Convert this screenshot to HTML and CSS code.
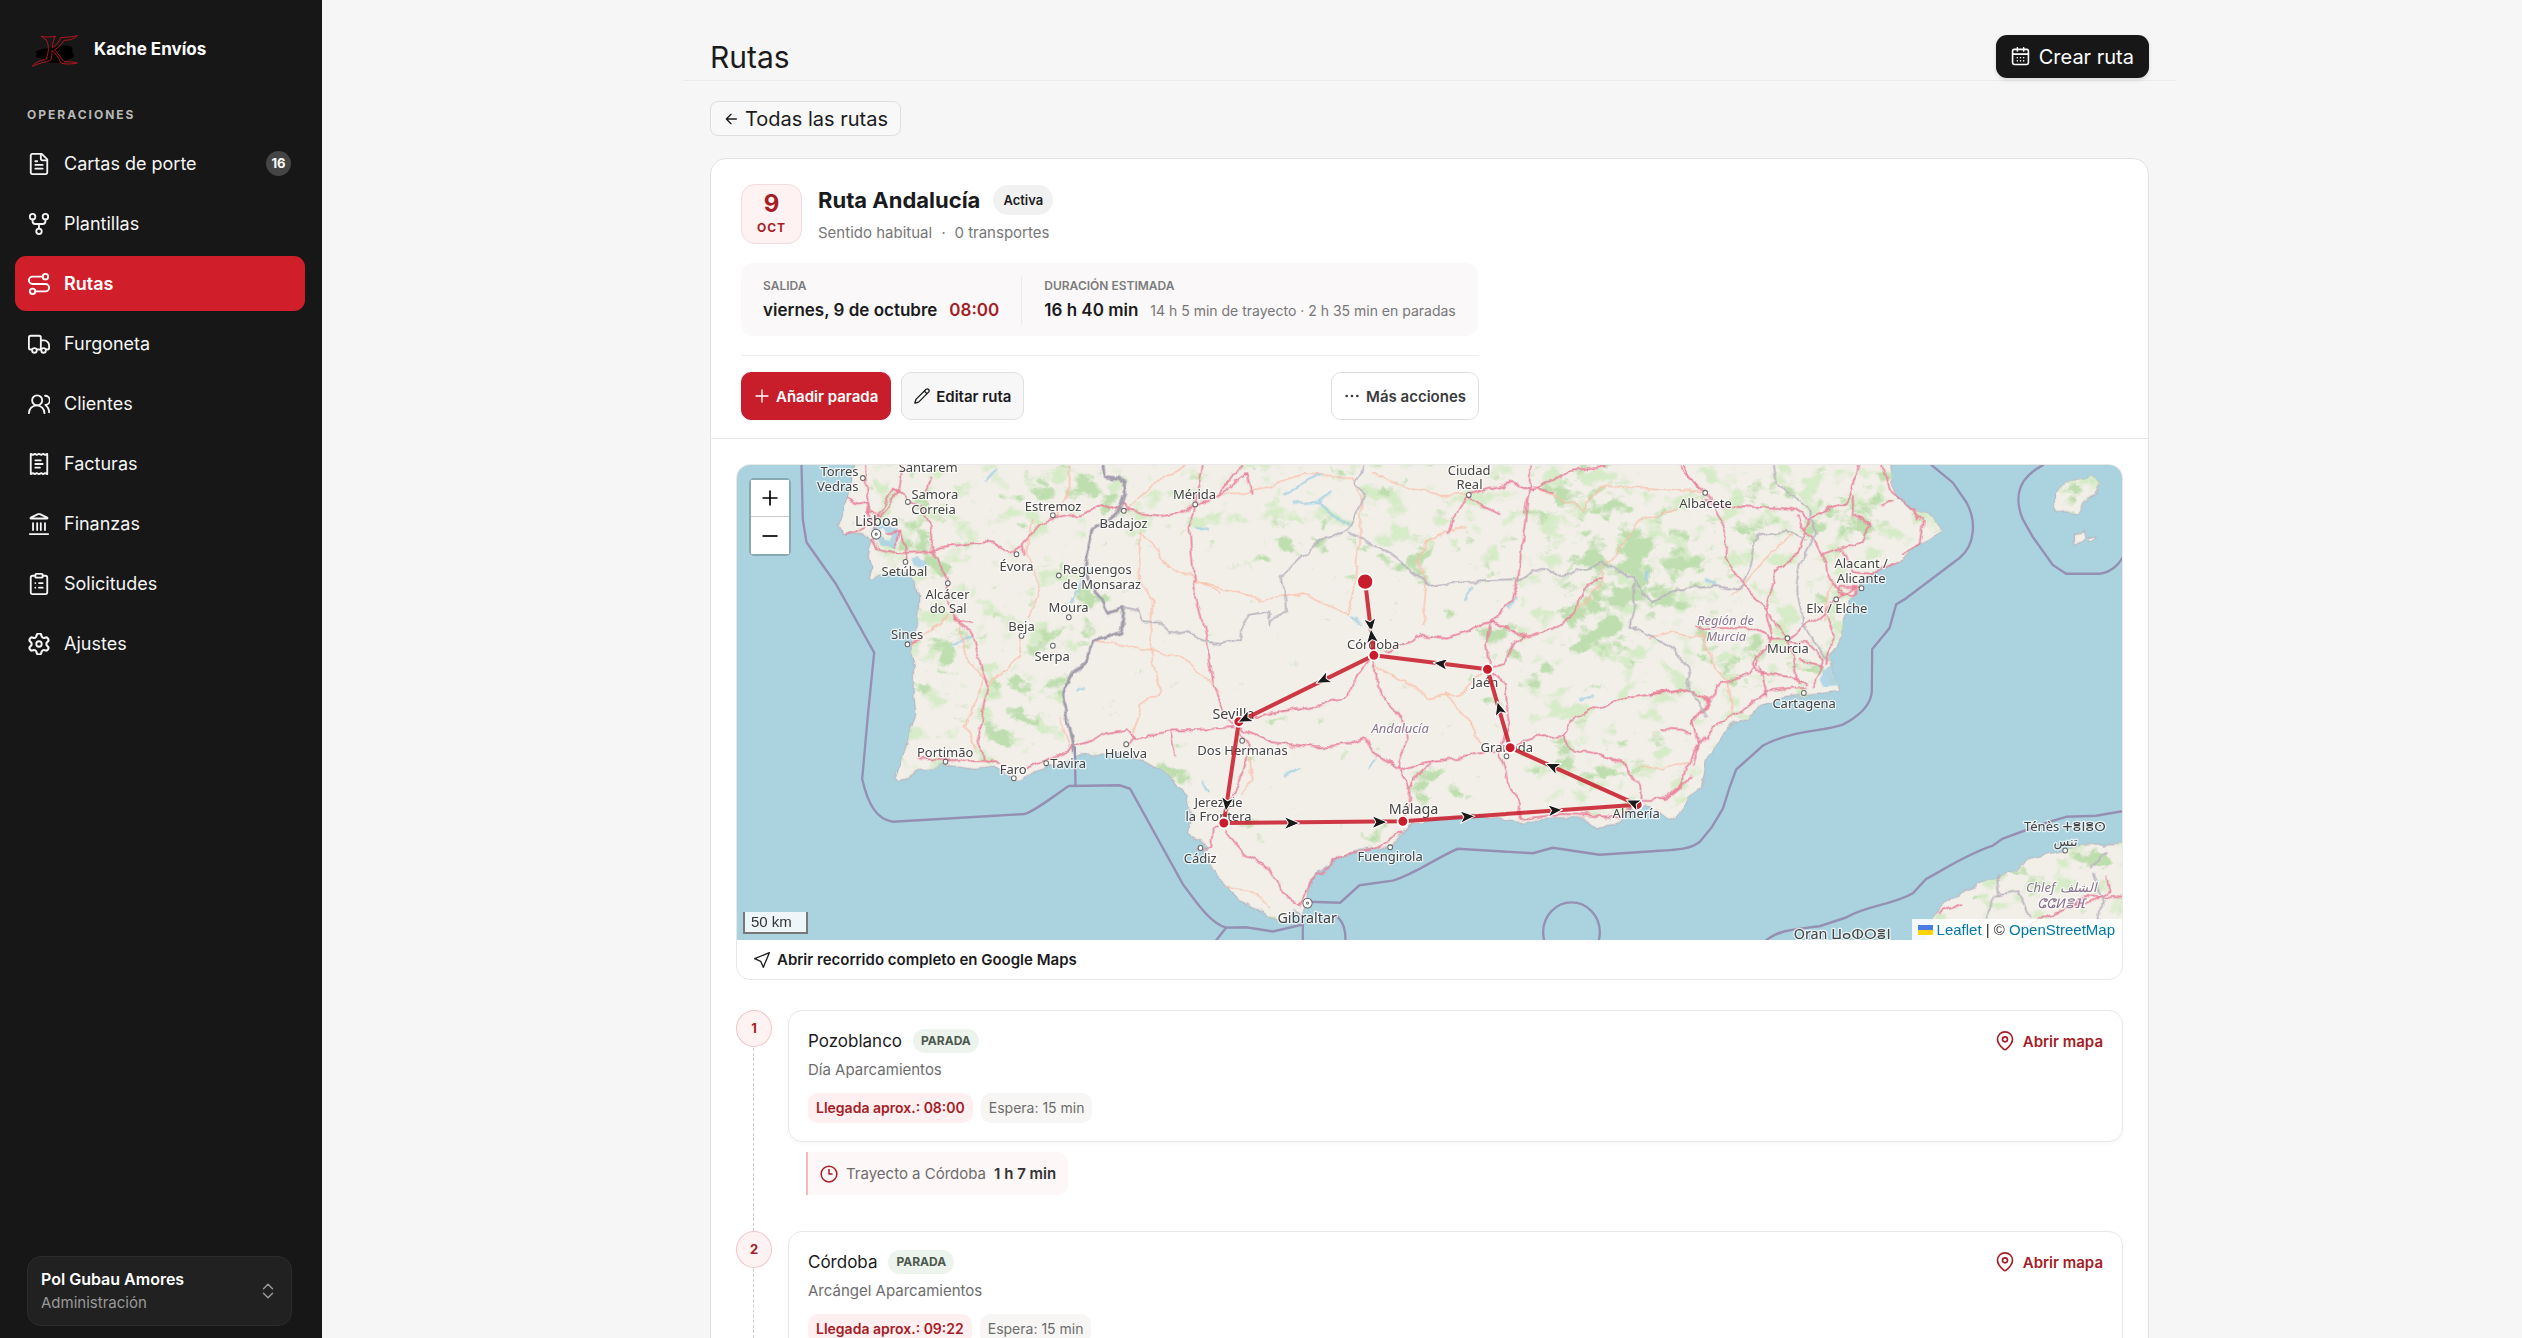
FILE: index.html
```html
<!DOCTYPE html>
<html lang="es">
<head>
<meta charset="utf-8">
<title>Rutas · Kache Envíos</title>
<link rel="stylesheet" href="styles.css">
</head>
<body>
<svg class="sprite" aria-hidden="true">
  <symbol id="i-file" viewBox="0 0 24 24"><path d="M15 1H5a2 2 0 0 0-2 2v18a2 2 0 0 0 2 2h14a2 2 0 0 0 2-2V7Z"/><path d="M14 1v5a2 2 0 0 0 2 2h5M10 9H8M16 13H8M16 17H8"/></symbol>
  <symbol id="i-fork" viewBox="0 0 24 24"><circle cx="12" cy="20" r="3"/><circle cx="5" cy="4" r="3"/><circle cx="19" cy="4" r="3"/><path d="M5 7v2a3 3 0 0 0 3 3h8a3 3 0 0 0 3-3V7M12 12v5"/></symbol>
  <symbol id="i-route" viewBox="0 0 24 24"><circle cx="5" cy="20" r="3"/><circle cx="19" cy="4" r="3"/><path d="M8 20h11a4 4 0 0 0 0-8H5a4 4 0 0 1 0-8h11"/></symbol>
  <symbol id="i-truck" viewBox="0 0 24 24"><path d="M14 18V5a2 2 0 0 0-2-2H3a2 2 0 0 0-2 2v12a1 1 0 0 0 1 1h2M10 18h4M20 18h2a1 1 0 0 0 1-1v-4c0-2-3-5-5-5h-4"/><circle cx="7" cy="19" r="2.500"/><circle cx="17" cy="19" r="2.500"/></symbol>
  <symbol id="i-users" viewBox="0 0 24 24"><path d="M18 22a8 8 0 0 0-17 0"/><circle cx="10" cy="8" r="5.500"/><path d="M23 21c0-3.370-2-6.500-4-8a5 5 0 0 0-.45-10"/></symbol>
  <symbol id="i-receipt" viewBox="0 0 24 24"><path d="M3 1v22l2.500-1 2 1 2-1 2.500 1 2.500-1 2 1 2-1 2.500 1V1l-2.500 1-2-1-2 1L12 1 9.500 2l-2-1-2 1ZM14 8H8M16 12H8M13 16H8"/></symbol>
  <symbol id="i-bank" viewBox="0 0 24 24"><path d="M2 23h20M5.500 18.500V11M10 18.500V11M14 18.500V11M18.500 18.500V11"/><path d="M11 1.300a2 2 0 0 1 2 0l8 3.800c.5.300.3.900-.2.900H3.200c-.5 0-.7-.6-.2-.9z"/></symbol>
  <symbol id="i-clip" viewBox="0 0 24 24"><rect x="8" y="1" width="8" height="4" rx="1"/><path d="M16 3h3a2 2 0 0 1 2 2v16a2 2 0 0 1-2 2H5a2 2 0 0 1-2-2V5a2 2 0 0 1 2-2h3M12 11h4M12 16h4M8 11h.01M8 16h.01"/></symbol>
  <symbol id="i-gear" viewBox="0 0 24 24"><path d="M9.671 4.136a2.340 2.340 0 0 1 4.659 0 2.340 2.340 0 0 0 3.319 1.915 2.340 2.340 0 0 1 2.330 4.033 2.340 2.340 0 0 0 0 3.831 2.340 2.340 0 0 1-2.330 4.033 2.340 2.340 0 0 0-3.319 1.915 2.340 2.340 0 0 1-4.659 0 2.340 2.340 0 0 0-3.320-1.915 2.340 2.340 0 0 1-2.330-4.033 2.340 2.340 0 0 0 0-3.831A2.340 2.340 0 0 1 6.350 6.051a2.340 2.340 0 0 0 3.319-1.915" transform="matrix(1.150 0 0 1.150 -1.800 -1.800)"/><circle cx="12" cy="12" r="3"/></symbol>
  <symbol id="i-updown" viewBox="0 0 24 24"><path d="m6 15 6 6 6-6M6 9l6-6 6 6"/></symbol>
  <symbol id="i-cal" viewBox="0 0 24 24"><rect x="2" y="3" width="20" height="19" rx="2"/><path d="M8 1v4M16 1v4M2 9h20M8 13.500h.01M12 13.500h.01M16 13.500h.01M8 17.500h.01M12 17.500h.01M16 17.500h.01"/></symbol>
  <symbol id="i-back" viewBox="0 0 24 24"><path d="m12 19-7-7 7-7M20 12H5"/></symbol>
  <symbol id="i-plus" viewBox="0 0 24 24"><path d="M3 12h18M12 3v18"/></symbol>
  <symbol id="i-minus" viewBox="0 0 24 24"><path d="M3 12h18"/></symbol>
  <symbol id="i-pencil" viewBox="0 0 24 24"><path d="M22.200 5.800a2.900 2.900 0 0 0-4-4L3.300 16.700a2 2 0 0 0-.5.800L1.300 22.200a.5.500 0 0 0 .6.600l4.600-1.500a2 2 0 0 0 .8-.5zM15.500 4.500l4 4"/></symbol>
  <symbol id="i-dots" viewBox="0 0 24 24"><circle cx="4" cy="12" r="1"/><circle cx="12" cy="12" r="1"/><circle cx="20" cy="12" r="1"/></symbol>
  <symbol id="i-nav" viewBox="0 0 24 24"><path d="M23 1 1 10l9 4 4 9Z"/></symbol>
  <symbol id="i-pin" viewBox="0 0 24 24"><path d="M21 10c0 5-5.500 10.200-7.400 11.800a2.500 2.500 0 0 1-3.200 0C8.500 20.200 3 15 3 10a9 9 0 0 1 18 0"/><circle cx="12" cy="10" r="3"/></symbol>
  <symbol id="i-clock" viewBox="0 0 24 24"><circle cx="12" cy="12" r="10.500"/><path d="M12 6v6h4"/></symbol>
</svg>

<div class="app">
  <aside class="sidebar">
    <div class="brand">
      <svg class="brand-logo" viewBox="0 0 138 96" role="img" aria-label="Kache Envíos">
        <path class="logo-shade" d="M10 50c18-8 30-10 46-12s44-12 62-2c8 6 0 14 6 20s0 14-12 16-16 12-36 12-26 0-36-8-18-6-26-8 6-10-4-18z"/>
        <path class="logo-line" d="M28 4c14 3 26 3 42 0-6 10-8 20-9 34C74 30 80 22 86 8c16-2 34-1 50-6-12 12-30 14-40 14-8 12-14 20-28 28 8 10 16 20 28 36 12 0 26 0 40 4-16 4-38 4-50 0-6-16-14-28-26-38 0 12 0 20-4 30C40 82 20 84 1 94c10-14 26-18 42-22 8-22 8-40 0-58-6-2-10-4-15-10z"/>
      </svg>
      <strong>Kache Envíos</strong>
    </div>
    <h2 class="section">Operaciones</h2>
    <nav class="nav">
      <a href="#"><svg><use href="#i-file"/></svg><span>Cartas de porte</span><b class="count">16</b></a>
      <a href="#"><svg><use href="#i-fork"/></svg><span>Plantillas</span></a>
      <a href="#" class="current" aria-current="page"><svg><use href="#i-route"/></svg><span>Rutas</span></a>
      <a href="#"><svg><use href="#i-truck"/></svg><span>Furgoneta</span></a>
      <a href="#"><svg><use href="#i-users"/></svg><span>Clientes</span></a>
      <a href="#"><svg><use href="#i-receipt"/></svg><span>Facturas</span></a>
      <a href="#"><svg><use href="#i-bank"/></svg><span>Finanzas</span></a>
      <a href="#"><svg><use href="#i-clip"/></svg><span>Solicitudes</span></a>
      <a href="#"><svg><use href="#i-gear"/></svg><span>Ajustes</span></a>
    </nav>
    <button type="button" class="user">
      <span class="user-text"><strong>Pol Gubau Amores</strong><span>Administración</span></span>
      <svg><use href="#i-updown"/></svg>
    </button>
  </aside>

  <main class="main">
    <div class="page">
      <header class="page-head">
        <h1>Rutas</h1>
        <button type="button" class="btn-dark"><svg><use href="#i-cal"/></svg>Crear ruta</button>
      </header>
      <div class="page-body">
        <a href="#" class="back"><svg><use href="#i-back"/></svg>Todas las rutas</a>

        <article class="card">
          <header class="card-head">
            <div class="route-head">
              <div class="date"><b>9</b><span>OCT</span></div>
              <div class="route-text">
                <div class="route-title"><h2>Ruta Andalucía</h2><span class="status">Activa</span></div>
                <p><span>Sentido habitual</span><i>·</i><span>0 transportes</span></p>
              </div>
            </div>
            <dl class="summary">
              <div><dt>SALIDA</dt><dd><b>viernes, 9 de octubre</b><b class="red">08:00</b></dd></div>
              <div><dt>DURACIÓN ESTIMADA</dt><dd><b>16 h 40 min</b><span>14 h 5 min de trayecto · 2 h 35 min en paradas</span></dd></div>
            </dl>
            <div class="actions">
              <button type="button" class="btn primary"><svg><use href="#i-plus"/></svg>Añadir parada</button>
              <button type="button" class="btn soft"><svg><use href="#i-pencil"/></svg>Editar ruta</button>
              <button type="button" class="btn more"><svg><use href="#i-dots"/></svg>Más acciones</button>
            </div>
          </header>

          <div class="card-body">
            <section class="map-card">
              <div class="map">
                <svg class="map-canvas" viewBox="51 47 4158 1425" preserveAspectRatio="xMidYMid slice">
                  <defs>
                    <filter id="rough" x="0" y="0" width="4300" height="1500" filterUnits="userSpaceOnUse"><feTurbulence type="fractalNoise" baseFrequency=".02" numOctaves="3" seed="4"/><feDisplacementMap in="SourceGraphic" scale="26" xChannelSelector="R" yChannelSelector="G"/></filter>
                    <filter id="woods" x="0" y="0" width="4300" height="1500" filterUnits="userSpaceOnUse" color-interpolation-filters="sRGB">
                      <feGaussianBlur in="SourceGraphic" stdDeviation="30" result="zone"/>
                      <feTurbulence type="fractalNoise" baseFrequency=".014 .02" numOctaves="5" seed="11" result="noise"/>
                      <feComposite in="zone" in2="noise" operator="arithmetic" k2=".36" k3="1" result="sum"/>
                      <feColorMatrix in="sum" values="0 0 0 0 .75  0 0 0 0 .87  0 0 0 0 .69  0 0 0 7 -5.200"/>
                    </filter>
                    <filter id="fields" x="0" y="0" width="4300" height="1500" filterUnits="userSpaceOnUse" color-interpolation-filters="sRGB">
                      <feTurbulence type="fractalNoise" baseFrequency=".013 .018" numOctaves="5" seed="29"/>
                      <feColorMatrix values="0 0 0 0 .84  0 0 0 0 .92  0 0 0 0 .78  0 0 0 7 -4"/>
                      <feComposite in2="SourceGraphic" operator="in"/>
                    </filter>
                    <path id="iberia" d="M410 0 395 90 380 140 376 180 352 215 365 240 430 236 456 262 445 290 458 330 445 365 500 355 560 350 590 372 598 430 594 500 572 560 585 620 584 710 590 760 570 820 545 890 527 935 540 945 600 912 680 900 760 912 820 908 895 945 960 917 1010 895 1100 872 1200 865 1290 898 1350 935 1400 985 1416 1050 1405 1090 1440 1108 1470 1135 1450 1150 1465 1180 1500 1225 1550 1280 1620 1320 1690 1348 1725 1312 1748 1322 1764 1300 1772 1260 1800 1200 1860 1162 1920 1142 2010 1135 2050 1095 2080 1066 2180 1052 2300 1048 2410 1065 2500 1050 2590 1050 2640 1075 2700 1060 2730 1020 2770 1010 2810 1030 2850 1055 2890 1030 2910 990 2945 968 2960 890 2980 850 3030 790 3090 765 3120 730 3170 712 3240 700 3355 690 3335 620 3330 590 3370 540 3375 480 3390 430 3420 400 3430 370 3470 345 3550 320 3580 280 3640 250 3670 228 3640 195 3580 175 3540 140 3515 90 3508 0Z"/>
                    <path id="africa" d="M3600 1430 3640 1330 3700 1275 3800 1230 3890 1205 3920 1170 4000 1150 4040 1140 4110 1130 4250 1125V1430Z"/>
                    <path id="ibiza" d="M4005 130 4035 95 4110 75 4145 95 4130 130 4085 155 4070 180 4040 175 4005 178ZM4065 240 4095 235 4100 255 4065 272ZM4108 255 4130 256 4125 266 4110 264Z"/>
                    <clipPath id="land"><use href="#iberia"/><use href="#africa"/><use href="#ibiza"/></clipPath>
                    <path id="arrow" d="M24 0-20-19-9 0-20 19Z"/>
                  </defs>

                  <g transform="scale(1 1.052)">
                    <g filter="url(#rough)">
                      <g class="land"><use href="#iberia"/><use href="#africa"/><use href="#ibiza"/></g>
                      <g class="cover" clip-path="url(#land)">
                        <g filter="url(#fields)"><path d="M380 0H1100V500L1020 720 1040 900 500 960ZM1100 0H3700V300L3300 800 2700 1100H2400V380L1700 200 1200 250ZM3600 1100H4250V1430H3600ZM3990 60H4160V280H3990Z"/></g>
                        <g filter="url(#woods)">
                          <ellipse cx="600" cy="220" rx="50" ry="80"/><ellipse cx="650" cy="330" rx="50" ry="60"/><ellipse cx="670" cy="550" rx="70" ry="50"/>
                          <ellipse cx="840" cy="835" rx="70" ry="35"/><ellipse cx="680" cy="700" rx="80" ry="70" opacity=".6"/><ellipse cx="920" cy="700" rx="120" ry="120" opacity=".5"/>
                          <ellipse cx="1000" cy="480" rx="150" ry="90" opacity=".55"/><ellipse cx="1050" cy="120" rx="180" ry="80" opacity=".6"/><ellipse cx="1180" cy="390" rx="70" ry="70" opacity=".6"/>
                          <ellipse cx="1380" cy="930" rx="60" ry="80" opacity=".8"/><ellipse cx="1700" cy="270" rx="160" ry="60" opacity=".6"/><ellipse cx="2000" cy="70" rx="180" ry="60" opacity=".6"/>
                          <ellipse cx="2100" cy="320" rx="200" ry="70" opacity=".6"/><ellipse cx="2600" cy="170" rx="170" ry="160" opacity=".6"/><ellipse cx="2640" cy="480" rx="110" ry="140"/>
                          <ellipse cx="2750" cy="330" rx="130" ry="110"/><ellipse cx="2880" cy="300" rx="120" ry="90" opacity=".8"/><ellipse cx="2900" cy="450" rx="110" ry="50" opacity=".8"/>
                          <ellipse cx="3080" cy="200" rx="90" ry="80" opacity=".6"/><ellipse cx="3180" cy="90" rx="60" ry="60" opacity=".8"/><ellipse cx="3350" cy="200" rx="130" ry="80" opacity=".8"/>
                          <ellipse cx="3500" cy="150" rx="80" ry="80" opacity=".6"/><ellipse cx="3060" cy="590" rx="130" ry="60" opacity=".8"/><ellipse cx="3280" cy="560" rx="60" ry="80" opacity=".6"/>
                          <ellipse cx="2330" cy="540" rx="70" ry="90" opacity=".6"/><ellipse cx="2180" cy="960" rx="140" ry="70" opacity=".6"/><ellipse cx="1940" cy="1105" rx="70" ry="35"/>
                          <ellipse cx="2580" cy="900" rx="130" ry="80" opacity=".6"/><ellipse cx="2720" cy="850" rx="60" ry="50" opacity=".8"/><ellipse cx="2430" cy="640" rx="80" ry="40" opacity=".7"/>
                          <ellipse cx="3900" cy="1200" rx="90" ry="60" opacity=".8"/><ellipse cx="4120" cy="1160" rx="100" ry="40"/><ellipse cx="4070" cy="120" rx="60" ry="40"/>
                        </g>
                      </g>
                      <g class="water">
                        <path class="wide" d="M462 225 490 215 530 240 515 270 480 262M590 318 610 330"/>
                        <path d="M1700 125 1760 90 1800 75M1720 155 1800 150 1840 190 1890 215M1800 150 1830 120M1430 225 1460 230M1060 440 1080 400 1110 340M800 90 830 60M700 560 760 530M1070 690 1090 680M1450 950 1465 975M2370 450 2385 430M2240 430 2255 390M1890 480 1920 495M2580 715 2620 705M1950 910 1970 890M1740 910 1700 930M2960 370 2990 385M2780 370 2790 350"/>
                        <path class="lagoon" d="M3312 630 3330 620 3345 670 3310 672Z"/>
                      </g>
                      <g class="minor">
                        <path d="M1050 45V110L1010 195M1440 20 1320 85 1220 170M1265 240 1255 350 1300 430 1290 565 1320 690 1270 730 1240 810M1265 240 1350 330 1500 410M1120 545 1290 570 1400 600 1500 690M940 200 920 300 965 390 930 480M905 530 900 590 810 670M720 490 745 610 790 650 740 790 770 850M690 470 640 510 575 555M1020 760 1050 850"/>
                        <path d="M1500 130 1640 110 1750 70 1900 80 1930 160 1920 250 1910 370 1885 470 1750 410 1640 430 1440 380M1960 70 2060 110 2170 130 2240 125M2240 220 2110 265 2100 320 2120 380 2110 500M2440 110 2590 170 2640 105 2780 110 2950 120M2870 165 2750 210 2700 290 2650 340 2640 390 2560 480M1970 620 2060 665 2130 710 2220 700 2290 640M2180 700 2260 790 2290 840M1590 880 1600 940 1570 980M1520 1250 1600 1260 1650 1310M2970 540 2850 520 2790 540M3040 420 3150 300 3220 240M2940 520 2990 620 3030 680 3040 770M2760 910 2890 900 2920 880M3330 380 3310 480"/>
                      </g>
                      <g class="road">
                        <path d="M437 45 440 110 450 180 480 190M550 45 540 110 500 170 480 190M635 80 620 130M550 130 520 115 480 180 420 230 375 240M530 115 600 160 630 210 640 290 680 360 690 440 700 480 760 520 790 640 808 675 775 800 790 885M380 140 410 155 440 150 460 230M455 260 470 285 520 297 610 293 700 275 800 262 870 290 910 270 960 215 1000 198 1080 185 1150 162 1190 175 1330 190 1380 180 1420 160M500 240 540 235 520 280M565 320 560 270 540 240M910 270 915 310M1430 160 1410 230 1425 390 1460 530 1480 660 1510 740 1540 790M1425 160 1450 45M1430 160 1510 125 1580 70 1600 125M1500 125 1570 45M600 885 690 890 790 885 840 895M920 910 970 885 1060 850 1120 830 1160 810 1220 800 1240 820 1350 802 1440 800 1560 790M1185 175 1210 155 1220 175M700 485 760 492M575 550 610 540M1240 815 1215 850M1355 805 1370 870"/>
                        <path d="M1560 775 1640 755 1800 730 1880 710 1920 640 1960 590M1965 590 1970 680 2050 770 2060 830 2035 910M1560 790 1650 835 1800 850 1880 840 1940 820 1960 870 2040 915 2075 960 2070 1010 2050 1060M2040 915 2120 895 2280 870 2370 850M2070 960 2110 920 2140 890M1560 800 1590 850 1570 930 1530 1000 1515 1060 1480 1080 1475 1130 1440 1140M1515 1090 1580 1160 1650 1200 1690 1270 1740 1300 1800 1210 1860 1160 1960 1140 2050 1090M2000 575 2060 558 2110 530 2180 540 2250 520 2310 490 2380 430 2395 380 2410 250 2430 110 2432 45M2240 130 2200 200 2190 245M2240 130 2380 95 2440 120 2540 65 2660 45M2240 130 2280 160 2340 185M2310 490 2410 530 2510 510 2570 470 2590 400 2640 370M2310 490 2300 560 2310 625M2310 625 2360 670 2370 780 2340 860 2370 960 2405 1010 2400 1055 2530 1040 2700 1050 2760 1000 2840 1000 2920 930M2310 620 2360 610 2380 560 2420 530M2390 840 2450 820 2530 815 2560 770 2620 740 2720 710 2880 685 2970 710 2925 780 2940 840 2920 900M2530 815 2550 855 2640 870 2720 900 2760 960 2760 1000M2820 795 2890 800 2920 815M2440 110 2500 130M2870 20 2940 110"/>
                        <path d="M2870 45 2960 120 3020 230 3015 310 3080 400 3140 460 3200 540 3220 590 3240 670M2960 150 3060 165 3220 172 3270 195 3380 150 3420 45M3230 190 3290 270 3320 330 3325 370 3370 410M3270 200 3240 290 3170 350 3140 460M3400 130 3400 190 3450 210 3430 265 3310 300M3370 290 3400 350 3460 355 3540 320M3490 45 3510 110 3580 170 3610 210 3600 270 3550 300M3480 160 3520 150M3140 470 3160 540 3100 610 3120 640 3220 650 3260 670M2930 510 3080 510 3150 540 3200 540 3290 480 3350 430 3400 400 3420 395M3360 395H3410V415H3360ZM3200 545 3260 550 3310 600 3280 680M3240 600 3310 615M3320 470 3340 540 3320 610M3260 680 3140 690 3060 750 2980 790 2940 840 2900 910 2880 960 2830 1000M2790 703 2890 685 2970 715M3010 665 3090 640 3120 600M3010 665 2970 720 2920 790M3120 620 3140 700"/>
                        <path d="M4160 1220 4170 1260 4120 1290 4060 1300 4110 1275 4209 1282M4060 1300 3960 1340 3900 1370M3660 1320 3720 1300"/>
                      </g>
                      <g class="border">
                        <path class="thick" d="M1150 45 1155 75 1200 80 1218 110 1190 190 1120 230 1095 340 1130 400 1165 465 1215 450 1205 520 1120 545 1105 600 1050 650 1025 715 1050 790 1065 860"/>
                        <path d="M1215 450 1260 460 1270 490 1330 495 1350 525 1400 515 1450 545 1500 555 1570 540 1580 470 1650 460 1650 500 1700 460 1690 360 1800 260 1890 230 1940 130 1905 100 1930 45M1890 240 2000 290 2080 350 2130 390 2240 375 2400 370 2440 345 2560 355 2650 320 2740 370 2750 440 2730 500 2850 560 2905 620 2910 690 2960 760M2740 370 2800 440 2870 400 2990 390 3060 400 3090 330 3110 250 3200 230 3260 260M3160 45 3170 100 3270 170 3290 240 3240 330 3230 400 3250 500 3320 600M3800 1340 3830 1270 3900 1260 3930 1330M4120 1210 4150 1290 4140 1340M3830 1210 3840 1270M4110 1190 4160 1150"/>
                      </g>
                    </g>

                    <g class="maritime">
                      <path d="M246 45 250 200 261 265 350 385 464 580 445 760 428 940C445 1010 470 1055 520 1062L915 1040C950 1030 1000 990 1048 960L1200 958 1232 968 1390 1240C1430 1290 1470 1350 1520 1364L1580 1363 1660 1375 1750 1355M1066 850 1068 958M1520 1364 1490 1400M1750 1345V1400M1765 1290 1862 1293 1920 1243 2020 1230C2090 1210 2140 1170 2215 1139L2440 1152 2500 1136 2640 1156 2800 1146C2870 1142 2910 1142 2940 1120L2975 1080 3010 1025 3030 965 3050 913 3130 845C3220 800 3310 805 3370 785 3420 760 3455 730 3457 690L3458 570 3510 510 3530 442 3560 425 3720 310C3770 270 3770 200 3740 150L3700 95 3636 45M3970 45C3900 80 3880 130 3910 200L3940 250 4000 330 4040 355H4140C4180 350 4200 325 4215 300M4209 1032 4130 1045 4040 1048 3980 1065 3850 1110 3820 1130C3740 1155 3670 1200 3620 1225L3580 1266C3520 1300 3440 1300 3380 1335L3300 1360C3220 1370 3180 1370 3140 1400"/>
                      <circle cx="2556" cy="1377" r="85"/><path d="M1850 1330C1875 1350 1878 1375 1878 1400"/>
                    </g>

                    <g class="dots">
                      <circle cx="430" cy="82" r="7"/><circle cx="565" cy="150" r="7"/><circle cx="558" cy="321" r="7"/><circle cx="1000" cy="188" r="7"/><circle cx="1213" cy="175" r="7"/><circle cx="1427" cy="157" r="7"/><circle cx="891" cy="299" r="7"/><circle cx="1018" cy="360" r="7"/><circle cx="685" cy="382" r="7"/><circle cx="1048" cy="479" r="7"/><circle cx="906" cy="532" r="7"/><circle cx="1000" cy="560" r="7"/><circle cx="564" cy="556" r="7"/><circle cx="678" cy="891" r="7"/><circle cx="883" cy="938" r="7"/><circle cx="980" cy="895" r="7"/><circle cx="1220" cy="841" r="7"/><circle cx="1443" cy="1137" r="7"/><circle cx="1568" cy="831" r="7"/><circle cx="2248" cy="130" r="7"/><circle cx="2012" cy="1135" r="7"/><circle cx="2361" cy="875" r="7"/><circle cx="2957" cy="124" r="7"/><circle cx="3426" cy="396" r="7"/><circle cx="3350" cy="428" r="7"/><circle cx="3204" cy="539" r="7"/><circle cx="3253" cy="695" r="7"/><circle cx="4037" cy="1144" r="7"/>
                      <circle cx="470" cy="242" r="14"/><circle cx="470" cy="242" r="3"/><circle cx="1764" cy="1294" r="14"/><circle cx="1764" cy="1294" r="3"/>
                    </g>
                  </g>

                  <g class="labels">
                    <text x="360" y="79">Torres</text><text x="355" y="124">Vedras</text><text x="626" y="69">Santarém</text><text x="646" y="150">Samora</text><text x="642" y="195">Correia</text>
                    <text x="1001" y="184">Estremoz</text><text x="1212" y="235">Badajoz</text><text x="1425" y="150">Mérida</text><text x="555" y="381">Setúbal</text><text x="891" y="365">Évora</text>
                    <text x="1133" y="374">Reguengos</text><text x="1147" y="418">de Monsaraz</text><text x="684" y="448">Alcácer</text><text x="686" y="492">do Sal</text><text x="1047" y="489">Moura</text><text x="906" y="544">Beja</text><text x="563" y="569">Sines</text><text x="998" y="635">Serpa</text>
                    <text x="677" y="922">Portimão</text><text x="881" y="973">Faro</text><text x="1046" y="955">Tavira</text><text x="1219" y="927">Huelva</text><text x="1442" y="1240">Cádiz</text><text x="1569" y="916">Dos Hermanas</text><text x="1497" y="1072">Jerez de</text><text x="1497" y="1116">la Frontera</text>
                    <text x="2249" y="76">Ciudad</text><text x="2250" y="120">Real</text><text x="2297" y="712">Jaén</text><text x="2362" y="907">Granada</text><text x="2750" y="1105">Almería</text><text x="2012" y="1236">Fuengirola</text><text x="1961" y="600">Córdoba</text>
                    <text x="2958" y="176">Albacete</text><text x="3425" y="357">Alacant /</text><text x="3425" y="401">Alicante</text><text x="3352" y="492">Elx / Elche</text><text x="3205" y="610">Murcia</text><text x="3254" y="776">Cartagena</text>
                    <text x="4036" y="1145">Ténès ⵜⴻⵏⴻⵙ</text><text x="4038" y="1191">تنس</text>
                    <g class="big"><text x="472" y="230">Lisboa</text><text x="1763" y="1421">Gibraltar</text><text x="1542" y="808">Sevilla</text><text x="2082" y="1095">Málaga</text><text x="3368" y="1468">Oran ⵡⴰⵀⵔⴻⵏ</text></g>
                    <g class="region"><text x="2042" y="850">Andalucía</text><text x="3018" y="527">Región de</text><text x="3020" y="576">Murcia</text><text x="3963" y="1328">Chlef</text><text x="4078" y="1328">الشلف</text><text x="4025" y="1377">ⵛⵛⵍⴻⴼ</text></g>
                  </g>

                  <g transform="translate(1440 0)">
                    <path class="track" d="M497 397 523 618 118 817 73 1121 610 1116 1313 1066 932 895 864 660 523 618 497 397"/>
                    <g class="stops"><circle cx="497" cy="397" r="24"/><circle cx="523" cy="618" r="16"/><circle cx="118" cy="817" r="16"/><circle cx="73" cy="1121" r="16"/><circle cx="610" cy="1116" r="16"/><circle cx="1313" cy="1066" r="16"/><circle cx="932" cy="895" r="16"/><circle cx="864" cy="660" r="16"/></g>
                    <g class="arrows">
                      <use href="#arrow" transform="translate(513 526) rotate(83)"/><use href="#arrow" transform="translate(517 562) rotate(263)"/><use href="#arrow" transform="translate(372 691) rotate(154)"/><use href="#arrow" transform="translate(137 808) rotate(154)"/><use href="#arrow" transform="translate(82 1063) rotate(98)"/><use href="#arrow" transform="translate(275 1121)"/><use href="#arrow" transform="translate(538 1118)"/><use href="#arrow" transform="translate(802 1102) rotate(-4)"/><use href="#arrow" transform="translate(1065 1083) rotate(-4)"/><use href="#arrow" transform="translate(1302 1061) rotate(204)"/><use href="#arrow" transform="translate(1060 952) rotate(204)"/><use href="#arrow" transform="translate(900 779) rotate(254)"/><use href="#arrow" transform="translate(725 643) rotate(187)"/>
                    </g>
                  </g>
                </svg>
                <div class="zoom"><button type="button" aria-label="Acercar"><svg><use href="#i-plus"/></svg></button><button type="button" aria-label="Alejar"><svg><use href="#i-minus"/></svg></button></div>
                <div class="scale">50 km</div>
                <div class="credit"><svg viewBox="0 0 15 10"><path fill="#4c7be1" d="M0 0h15v5H0z"/><path fill="#ffd500" d="M0 5h15v5H0z"/></svg><a href="#">Leaflet</a> | © <a href="#">OpenStreetMap</a></div>
              </div>
              <a href="#" class="map-link"><svg><use href="#i-nav"/></svg>Abrir recorrido completo en Google Maps</a>
            </section>

            <ol class="stops-list">
              <li>
                <span class="num">1</span>
                <div class="stop-col">
                  <div class="stop">
                    <div class="stop-info">
                      <div class="stop-title"><h3>Pozoblanco</h3><span class="kind">PARADA</span></div>
                      <p>Día Aparcamientos</p>
                      <div class="chips"><span class="chip eta">Llegada aprox.: 08:00</span><span class="chip">Espera: 15 min</span></div>
                    </div>
                    <a href="#" class="open-map"><svg><use href="#i-pin"/></svg>Abrir mapa</a>
                  </div>
                  <div class="leg"><svg><use href="#i-clock"/></svg>Trayecto a Córdoba <b>1 h 7 min</b></div>
                </div>
              </li>
              <li>
                <span class="num">2</span>
                <div class="stop-col">
                  <div class="stop">
                    <div class="stop-info">
                      <div class="stop-title"><h3>Córdoba</h3><span class="kind">PARADA</span></div>
                      <p>Arcángel Aparcamientos</p>
                      <div class="chips"><span class="chip eta">Llegada aprox.: 09:22</span><span class="chip">Espera: 15 min</span></div>
                    </div>
                    <a href="#" class="open-map"><svg><use href="#i-pin"/></svg>Abrir mapa</a>
                  </div>
                </div>
              </li>
            </ol>
          </div>
        </article>
      </div>
    </div>
  </main>
</div>
</body>
</html>
```
FILE: styles.css
```css
* { box-sizing: border-box; }
body, h1, h2, h3, p, dl, dd, ol { margin: 0; padding: 0; }
body { background: #f6f6f6; color: #1b1b1d; font-family: Inter, "Noto Sans", sans-serif; font-size: 16px; }
a { color: inherit; text-decoration: none; }
button { font: inherit; cursor: pointer; }
svg { flex: none; fill: none; stroke: currentColor; stroke-width: 2; stroke-linecap: round; stroke-linejoin: round; }
.sprite { position: absolute; width: 0; height: 0; }
.app { display: flex; height: 100vh; overflow: hidden; }

/* Sidebar */
.sidebar { display: flex; flex-direction: column; width: 322px; flex: none; padding: 27px 16px 12px; background: #171717; color: #f5f5f5; }
.brand { display: flex; align-items: center; gap: 16px; height: 44px; padding-left: 16px; color: #fff; font-size: 17px; }
.brand-logo { width: 46px; height: 32px; margin-top: 4px; stroke: none; }
.logo-shade { fill: #000; }
.logo-line { stroke: #b01622; stroke-width: 3; }
.section { margin: 36px 0 13px 11px; color: #b8b8b8; font-size: 12px; line-height: 16px; font-weight: 700; letter-spacing: 2px; text-transform: uppercase; }
.nav { display: flex; flex-direction: column; gap: 5px; }
.nav a { display: flex; align-items: center; gap: 14px; height: 55px; padding: 0 15px 0 12px; border-radius: 11px; font-size: 18px; }
.nav a span { flex: 1; }
.nav svg { width: 22px; height: 22px; }
.nav .current { margin: 0 1px 0 -1px; padding-left: 13px; background: #d01f2b; color: #fff; font-weight: 600; }
.count { width: 25px; height: 25px; border-radius: 50%; background: #454545; color: #fff; font-size: 13px; line-height: 25px; text-align: center; }
.user { display: flex; align-items: center; justify-content: space-between; margin: auto 14px 0 11px; height: 70px; padding: 0 14px 0 13px; border: 1px solid #2c2c2c; border-radius: 14px; background: #212121; color: #999; text-align: left; }
.user-text { display: flex; flex-direction: column; font-size: 15px; line-height: 23px; }
.user strong { color: #fff; font-size: 16px; font-weight: 600; }
.user svg { width: 18px; height: 18px; }

/* Page */
.main { flex: 1; min-width: 0; padding-left: 15px; overflow: hidden; }
.page { max-width: 1493px; margin: 0 auto; }
.page-head { display: flex; align-items: center; justify-content: space-between; height: 81px; padding: 35px 27px 2px; border-bottom: 1px solid #ebebeb; }
.page-head h1 { font-size: 30px; font-weight: 400; line-height: 40px; }
.btn-dark { display: flex; align-items: center; gap: 9px; height: 43px; padding: 0 15px; border: 0; border-radius: 11px; background: #171717; color: #fff; font-size: 20px; box-shadow: 0 2px 4px rgba(0,0,0,.12); }
.btn-dark svg { width: 19px; height: 19px; }
.page-body { display: flex; flex-direction: column; align-items: flex-start; padding: 20px 27px 40px; }
.back { display: flex; align-items: center; gap: 6px; height: 35px; padding: 0 12px; border: 1px solid #dedede; border-radius: 8px; background: #f8f8f8; font-size: 20px; }
.back svg { width: 16px; height: 16px; }
.card { width: 100%; margin-top: 22px; border: 1px solid #e2e2e2; border-radius: 16px; background: #fff; }
.card-head { padding: 25px 30px 18px; border-bottom: 1px solid #e6e6e6; }
.route-head { display: flex; gap: 16px; }
.date { display: flex; flex-direction: column; align-items: center; width: 61px; height: 60px; padding-top: 5px; border: 1px solid #f3dcdd; border-radius: 14px; background: #fef2f2; color: #a51d26; }
.date b { font-size: 24px; line-height: 28px; }
.date span { font-size: 12px; font-weight: 700; line-height: 20px; letter-spacing: 1px; }
.route-title { display: flex; align-items: center; gap: 13px; height: 32px; }
.route-title h2 { font-size: 22px; font-weight: 700; }
.status { padding: 0 10px; border-radius: 15px; background: #f1f1f1; font-size: 13px; font-weight: 600; line-height: 30px; }
.route-text p { display: flex; gap: 9px; margin-top: 6px; color: #777; font-size: 15px; line-height: 22px; }
.summary { display: flex; width: fit-content; margin-top: 19px; padding: 13px 0 11px; border-radius: 12px; background: #faf8f8; }
.summary div { padding: 0 22px; }
.summary div + div { border-left: 1px solid #efecec; }
.summary dt { color: #7c7c7c; font-size: 12px; font-weight: 600; line-height: 20px; }
.summary dd { display: flex; align-items: baseline; gap: 12px; font-size: 17px; line-height: 29px; }
.summary b { font-weight: 600; }
.summary span { color: #777; font-size: 14px; }
.red { color: #a51d26; }
.actions { display: flex; gap: 10px; width: 738px; max-width: 100%; margin-top: 19px; padding-top: 16px; border-top: 1px solid #eee; }
.btn { display: flex; align-items: center; gap: 6px; height: 48px; padding: 0 12px; border: 1px solid #dfdfdf; border-radius: 10px; background: #fff; color: #1b1b1d; font-size: 15px; font-weight: 600; }
.btn svg { width: 16px; height: 16px; }
.primary { border-color: #c81e2c; background: #c81e2c; color: #fff; }
.soft { background: #f7f7f7; }
.more { margin-left: auto; color: #3a3a3c; }

/* Map */
.card-body { padding: 25px; }
.map-card { border: 1px solid #e8e8e8; border-radius: 14px; overflow: hidden; }
.map { position: relative; height: 475px; background: #abd3df; }
.map-canvas { display: block; width: 100%; height: 100%; }
.land { fill: #f2efe9; stroke: #b9b3bb; stroke-width: 3; }
.cover { fill: #000; stroke: none; }
.water { stroke: #a4d0e4; stroke-width: 7; opacity: .8; }
.water .wide { stroke-width: 20; }
.water .lagoon { fill: #a4d0e4; }
.minor { stroke: #fabfa9; stroke-width: 4; }
.road { stroke: #e8829a; stroke-width: 5; }
.border { stroke: #b9b2bd; stroke-width: 5; }
.border .thick { stroke: #a39dab; stroke-width: 9; }
.maritime { stroke: #958fb3; stroke-width: 7; }
.dots { fill: #fff; stroke: #666; stroke-width: 3; }
.labels { fill: #444; stroke: rgba(255,255,255,.7); stroke-width: 8; paint-order: stroke; font-family: "Noto Sans", "DejaVu Sans", sans-serif; font-size: 39px; text-anchor: middle; }
.big { font-size: 43px; }
.region { fill: #89758f; font-style: italic; }
.track { stroke: #c81e2c; stroke-width: 12; opacity: .88; }
.stops { fill: #c81e2c; stroke: #fff; stroke-width: 5; }
.arrows { fill: #1a1a1a; stroke: #fff; stroke-width: 3; }
.zoom { position: absolute; left: 12px; top: 13px; width: 42px; border: 2px solid rgba(0,0,0,.2); border-radius: 5px; background-clip: padding-box; }
.zoom button { display: flex; align-items: center; justify-content: center; width: 100%; height: 37px; padding: 0; border: 0; border-bottom: 1px solid #ccc; background: #fff; color: #000; }
.zoom button:last-child { border-bottom: 0; }
.zoom svg { width: 20px; height: 20px; stroke-linecap: butt; }
.scale { position: absolute; left: 6px; bottom: 6px; width: 65px; height: 22px; padding-left: 6px; border: 2px solid #777; border-top: 0; background: rgba(255,255,255,.8); color: #333; font: 15px/20px "Liberation Sans", Arial, sans-serif; }
.credit { position: absolute; right: 0; bottom: 0; height: 21px; padding: 0 7px 0 6px; background: rgba(255,255,255,.85); color: #333; font: 15px/21px "Liberation Sans", Arial, sans-serif; }
.credit a { color: #0078a8; }
.credit svg { width: 15px; height: 10px; margin-right: 4px; stroke: none; }
.map-link { display: flex; align-items: center; gap: 7px; height: 39px; padding: 0 17px; color: #1b1b1d; font-size: 15px; font-weight: 600; }
.map-link svg { width: 16px; height: 16px; }

/* Stops */
.stops-list { margin-top: 30px; list-style: none; }
.stops-list li { display: flex; gap: 16px; position: relative; padding-bottom: 36px; }
.stops-list li::before { content: ""; position: absolute; left: 17px; top: 38px; bottom: 0; border-left: 1px dashed #d0cccc; }
.num { flex: none; width: 36px; height: 37px; border: 1px solid #f2c4c7; border-radius: 50%; background: #fef2f2; color: #a51d26; font-size: 13px; font-weight: 700; line-height: 35px; text-align: center; }
.stop-col { flex: 1; min-width: 0; }
.stop { display: flex; justify-content: space-between; align-items: flex-start; height: 132px; padding: 18px 19px; border: 1px solid #e8e8e8; border-radius: 14px; box-shadow: 0 2px 5px rgba(0,0,0,.03); }
.stop-title { display: flex; align-items: center; gap: 11px; height: 24px; }
.stop h3 { font-size: 17px; font-weight: 400; }
.kind { padding: 0 8px; border-radius: 12px; background: #edf3ed; color: #4c5a4e; font-size: 12px; font-weight: 700; line-height: 24px; }
.stop p { margin-top: 5px; color: #6d6d6d; font-size: 15px; line-height: 24px; }
.chips { display: flex; gap: 8px; margin-top: 11px; }
.chip { padding: 0 8px; border-radius: 10px; background: #f7f6f4; color: #6d6d6d; font-size: 14px; line-height: 30px; }
.eta { background: #fef0f1; color: #a51d26; font-weight: 600; }
.open-map { display: flex; align-items: center; gap: 8px; height: 24px; color: #a51d26; font-size: 15px; font-weight: 600; }
.open-map svg { width: 20px; height: 20px; }
.leg { display: flex; align-items: center; gap: 8px; width: fit-content; height: 43px; margin: 10px 0 0 18px; padding: 0 12px; border-left: 2px solid #f0b9bf; border-radius: 0 10px 10px 0; background: #fdf7f7; color: #6d6d6d; font-size: 15px; }
.leg svg { width: 18px; height: 18px; color: #a51d26; }
.leg b { color: #333; font-weight: 600; }
```
